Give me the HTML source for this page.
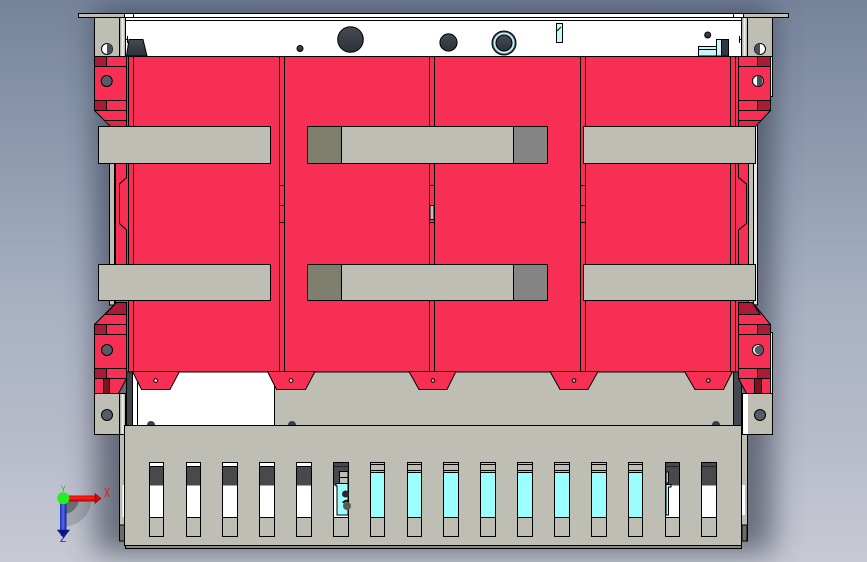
<!DOCTYPE html>
<html><head><meta charset="utf-8"><style>
html,body{margin:0;padding:0;width:867px;height:562px;overflow:hidden;background:#a0a8b8}
svg{display:block}
text{font-family:"Liberation Sans",sans-serif}
</style></head><body>
<svg xmlns="http://www.w3.org/2000/svg" width="867" height="562" viewBox="0 0 867 562">
<defs>
<linearGradient id="bg" x1="0" y1="0" x2="0" y2="1">
<stop offset="0" stop-color="#76849a"/><stop offset=".32" stop-color="#929fb3"/><stop offset=".55" stop-color="#a8b2c3"/><stop offset=".78" stop-color="#b7bbc9"/><stop offset="1" stop-color="#c7cad4"/>
</linearGradient>
<linearGradient id="dk" x1="0" y1="0" x2="0" y2="1"><stop offset="0" stop-color="#454a54"/><stop offset="1" stop-color="#2c3039"/></linearGradient>
<linearGradient id="st" x1="0" y1="0" x2="1" y2="0"><stop offset="0" stop-color="#8f8f88"/><stop offset=".5" stop-color="#f4f4f0"/><stop offset="1" stop-color="#a5a59e"/></linearGradient>
<linearGradient id="hz" x1="0" y1="0" x2="0" y2="1"><stop offset="0" stop-color="#e00000"/><stop offset=".4" stop-color="#ff2020"/><stop offset="1" stop-color="#b00000"/></linearGradient>
<linearGradient id="vt" x1="0" y1="0" x2="1" y2="0"><stop offset="0" stop-color="#1f2fb0"/><stop offset=".5" stop-color="#5566f0"/><stop offset="1" stop-color="#101c90"/></linearGradient>
<filter id="bl" x="-20%" y="-20%" width="140%" height="140%"><feGaussianBlur stdDeviation="15"/></filter>
<g id="s14"><rect x="0" y="462.5" width="14" height="74" fill="#bebeb4"/><rect x="0" y="463" width="14" height="54" fill="#fff"/><rect x="0" y="466" width="14" height="19.5" fill="#47494d"/><path d="M0 466.5H14M0 517.5H14M0 462.5H14V536.5H0Z" fill="none" stroke="#000"/></g>
<g id="s15"><rect x="0" y="462.5" width="15" height="74" fill="#bebeb4"/><rect x="0" y="463" width="15" height="54" fill="#fff"/><rect x="0" y="466" width="15" height="19.5" fill="#47494d"/><path d="M0 466.5H15M0 517.5H15M0 462.5H15V536.5H0Z" fill="none" stroke="#000"/></g>
<g id="c14"><rect x="0" y="462.5" width="14" height="74" fill="#bebeb4"/><rect x="0" y="473" width="14" height="44" fill="#9cffff"/><path d="M0 464.5H14M0 470.5H14M0 472.5H14M0 517.5H14M0 462.5H14V536.5H0Z" fill="none" stroke="#000"/></g>
<g id="c15"><rect x="0" y="462.5" width="15" height="74" fill="#bebeb4"/><rect x="0" y="473" width="15" height="44" fill="#9cffff"/><path d="M0 464.5H15M0 470.5H15M0 472.5H15M0 517.5H15M0 462.5H15V536.5H0Z" fill="none" stroke="#000"/></g>
<g id="tick"><path d="M0 185.5H5M0 205.5H5M0 222.5H5" stroke="#000" fill="none"/></g>
</defs>

<rect width="867" height="562" fill="url(#bg)"/>
<rect x="95" y="8" width="678" height="545" fill="#30394a" opacity=".62" filter="url(#bl)"/>

<g shape-rendering="crispEdges" stroke-linejoin="miter">
<!-- behind tray -->
<rect x="119.5" y="430" width="5" height="111" fill="#bebeb4" stroke="#000"/>
<rect x="119.5" y="525" width="5" height="16" fill="#6d6d64" stroke="#000"/>
<rect x="122.5" y="485" width="2" height="32" fill="#fff"/>
<rect x="741.5" y="430" width="6" height="111" fill="#bebeb4" stroke="#000"/>
<rect x="742" y="525" width="5" height="16" fill="#6d6d64" stroke="#000"/>
<rect x="742" y="485" width="3" height="30" fill="#fff"/>

<!-- top flange and white panel -->
<rect x="125" y="13.5" width="618" height="7" fill="#fff"/>
<rect x="125" y="20" width="618" height="36" fill="#fff"/>
<path d="M125 13.5H743M125 17.5H743M125 20.5H743M133.5 14V17M733.5 14V17" stroke="#000" fill="none"/>
<rect x="78.5" y="13.5" width="46" height="4" fill="#bebeb4" stroke="#000"/>
<rect x="743.5" y="13.5" width="45" height="4" fill="#bebeb4" stroke="#000"/>
<!-- top left bracket -->
<rect x="94.5" y="17.5" width="31" height="39" fill="#bebeb4" stroke="#000"/>
<rect x="119.5" y="17.5" width="6" height="39" fill="url(#st)" stroke="#000"/>
<!-- top right bracket -->
<rect x="741.5" y="17.5" width="31" height="39" fill="#bebeb4" stroke="#000"/>
<rect x="741.5" y="17.5" width="6" height="39" fill="url(#st)" stroke="#000"/>
</g>

<!-- top holes -->
<circle cx="107" cy="49" r="5.5" fill="#fff" stroke="#000"/><path d="M107 43.5A5.5 5.5 0 0 1 107 54.5Z" fill="#4a4e56"/>
<circle cx="760" cy="49" r="5.5" fill="#fff" stroke="#000"/><path d="M760 43.5A5.5 5.5 0 0 0 760 54.5Z" fill="#4a4e56"/>
<path d="M129 39.5H143L147 56H126.5Z" fill="url(#dk)" stroke="#000"/>
<circle cx="300" cy="48.5" r="3" fill="url(#dk)" stroke="#000"/>
<circle cx="350.5" cy="39.5" r="12.8" fill="url(#dk)" stroke="#000"/>
<circle cx="448.5" cy="42.5" r="8.6" fill="url(#dk)" stroke="#000"/>
<circle cx="504" cy="43" r="12" fill="#4a5058" stroke="#000"/>
<circle cx="504" cy="43" r="10.5" fill="#bdeff7"/>
<circle cx="504" cy="43" r="8" fill="url(#dk)" stroke="#000"/>
<rect x="556.5" y="23.5" width="6" height="19" fill="#c8f4fb" stroke="#000"/><path d="M557 31L561 27" stroke="#000" fill="none"/>
<circle cx="707.7" cy="35" r="3" fill="url(#dk)" stroke="#000"/>
<g shape-rendering="crispEdges">
<path d="M698.5 56V46.5H716.5V39.5H722V56Z" fill="#c8f4fb" stroke="#000"/>
<path d="M698.5 49.5H716.5M716.5 46.5V56" fill="none" stroke="#000"/>
<rect x="721.5" y="39.5" width="7" height="16.5" fill="#33373f" stroke="#000"/>
<path d="M739.5 36V43M739.5 39.5H742" stroke="#000" fill="none"/>
<path d="M127.5 36V43M125 39.5H127" stroke="#000" fill="none"/>

<!-- side rails mid -->
<rect x="109.5" y="160" width="6" height="145" fill="#bebeb4" stroke="#000"/>
<path d="M114.5 160V305" stroke="#000" fill="none"/>
<rect x="748.5" y="120" width="9" height="185" fill="#bebeb4" stroke="#000"/>
<rect x="754" y="121" width="3" height="183" fill="#e8e8e0"/>
<path d="M753.5 120V305" stroke="#000" fill="none"/>

<!-- bottom areas -->
<rect x="132.5" y="371.5" width="142" height="55" fill="#fff" stroke="#000"/>
<path d="M137.5 372V426" stroke="#000" fill="none"/>
<rect x="126.5" y="371.5" width="6" height="55" fill="#3f434a" stroke="#000"/>
<rect x="274.5" y="371.5" width="459" height="55" fill="#bebeb4" stroke="#000"/>
<rect x="733.5" y="371.5" width="8" height="55" fill="#44484f" stroke="#000"/>

<!-- main red -->
<rect x="115" y="56" width="633" height="316" fill="#f72f55"/>
<path d="M125 56.5H743M126.5 372H741" stroke="#000" fill="none"/>

<!-- vertical lines -->
<path d="M128.5 56V372M133.5 56V372M279.5 56V372M284.5 56V372M429.5 56V372M434.5 56V372M580.5 56V372M585.5 56V372M730.5 56V372M735.5 56V372" stroke="#000" fill="none"/>
<path d="M115.5 160V305M748.5 160V305" stroke="#000" fill="none"/>
<use href="#tick" x="279.5"/><use href="#tick" x="429.5"/><use href="#tick" x="580.5"/>
<rect x="430" y="205.5" width="4" height="14" fill="#bebeb4" stroke="#000"/>
</g>

<!-- top left block -->
<g>
<path d="M94.5 56.5H126.5V126.5H110.5L94.5 110.5Z" fill="#f72f55" stroke="#000"/>
<rect x="94.5" y="56.5" width="12" height="10" fill="#a81c37" stroke="#000" shape-rendering="crispEdges"/>
<rect x="94.5" y="100.5" width="12" height="10" fill="#a81c37" stroke="#000" shape-rendering="crispEdges"/>
<rect x="94.5" y="66.5" width="32" height="34" fill="#f72f55" stroke="#000" shape-rendering="crispEdges"/>
<path d="M94.5 110.5H126.5M104.5 120.5H126.5" stroke="#000" fill="none" shape-rendering="crispEdges"/>
<path d="M105 121H126V126H111Z" fill="#e0264a"/>
<circle cx="106.7" cy="81" r="5.5" fill="#565c66" stroke="#000"/>
<!-- top right block -->
<path d="M738.5 56.5H770.5V110.5L755.5 126.5H738.5Z" fill="#f72f55" stroke="#000"/>
<rect x="757.5" y="56.5" width="13" height="10" fill="#a81c37" stroke="#000" shape-rendering="crispEdges"/>
<rect x="757.5" y="100.5" width="13" height="10" fill="#a81c37" stroke="#000" shape-rendering="crispEdges"/>
<rect x="738.5" y="66.5" width="32" height="34" fill="#f72f55" stroke="#000" shape-rendering="crispEdges"/>
<path d="M738.5 110.5H770.5M738.5 120.5H760.5" stroke="#000" fill="none" shape-rendering="crispEdges"/>
<path d="M739 121H760L755 126H739Z" fill="#e0264a"/>
<rect x="770.5" y="56.5" width="2" height="40" fill="#e8e8e0" stroke="#000" shape-rendering="crispEdges"/>
<circle cx="758" cy="81" r="5.5" fill="#fff" stroke="#000"/><path d="M757 75.5A5.5 5.5 0 0 1 757 86.5Z" fill="#4a4e56"/>
<!-- side inner contours -->
<path d="M126.5 163V177.5L119.5 184V223.5L126.5 230V264" fill="none" stroke="#000"/>
<path d="M738.5 163V177.5L746.5 184V223.5L738.5 230V264" fill="none" stroke="#000"/>
<!-- bottom left block -->
<path d="M94.5 324.5L116.5 302.5H126.5V378.5L118.5 393.5H94.5Z" fill="#f72f55" stroke="#000"/>
<path d="M105 314.5L116.5 302.5H126.5V314.5Z" fill="#a81c37" stroke="#000"/>
<path d="M94.5 324.5H126.5M94.5 378.5H126.5" stroke="#000" fill="none" shape-rendering="crispEdges"/>
<rect x="94.5" y="324.5" width="12" height="10" fill="#a81c37" stroke="#000" shape-rendering="crispEdges"/>
<rect x="94.5" y="368.5" width="12" height="10" fill="#a81c37" stroke="#000" shape-rendering="crispEdges"/>
<rect x="94.5" y="334.5" width="32" height="34" fill="#f72f55" stroke="#000" shape-rendering="crispEdges"/>
<rect x="103.5" y="378.5" width="6" height="15" fill="#7c1226" stroke="#000" shape-rendering="crispEdges"/>
<circle cx="107" cy="350" r="5.5" fill="#565c66" stroke="#000"/>
<!-- bottom right block -->
<path d="M738.5 302.5H752.5L770.5 324.5V393.5H746.5L738.5 378.5Z" fill="#f72f55" stroke="#000"/>
<path d="M738.5 302.5H752.5L760 314.5H738.5Z" fill="#a81c37" stroke="#000"/>
<path d="M738.5 324.5H770.5M738.5 378.5H770.5" stroke="#000" fill="none" shape-rendering="crispEdges"/>
<rect x="757.5" y="324.5" width="13" height="10" fill="#a81c37" stroke="#000" shape-rendering="crispEdges"/>
<rect x="757.5" y="368.5" width="13" height="10" fill="#a81c37" stroke="#000" shape-rendering="crispEdges"/>
<rect x="738.5" y="334.5" width="32" height="34" fill="#f72f55" stroke="#000" shape-rendering="crispEdges"/>
<rect x="754.5" y="378.5" width="7" height="15" fill="#7c1226" stroke="#000" shape-rendering="crispEdges"/>
<rect x="770.5" y="332.5" width="2" height="61" fill="#e8e8e0" stroke="#000" shape-rendering="crispEdges"/>
<circle cx="758" cy="350" r="5.5" fill="#fff" stroke="#000"/><circle cx="759" cy="350" r="4.4" fill="#565c66"/>
</g>

<g shape-rendering="crispEdges">
<!-- bottom brackets -->
<rect x="94.5" y="393.5" width="31" height="41" fill="#bebeb4" stroke="#000"/>
<rect x="119.5" y="393.5" width="6" height="41" fill="url(#st)" stroke="#000"/>
<rect x="741.5" y="393.5" width="31" height="41" fill="#bebeb4" stroke="#000"/>
<rect x="742" y="394" width="6" height="40" fill="#fff"/>
<path d="M742.5 394V434" stroke="#000" fill="none"/>
</g>
<circle cx="107" cy="415" r="5.5" fill="#565c66" stroke="#000"/>
<circle cx="760" cy="415" r="5.5" fill="#565c66" stroke="#000"/>

<!-- tabs -->
<g fill="#f72f55" stroke="#000">
<path d="M132.5 371.5H179.5L170 389.5H141.5Z"/>
<path d="M267.5 371.5H315L305.5 389.5H276.5Z"/>
<path d="M409 371.5H456L447 389.5H419Z"/>
<path d="M550 371.5H598L588 389.5H560Z"/>
<path d="M684.5 371.5H732.5L723.5 389.5H695Z"/>
</g>
<circle cx="155.7" cy="380.5" r="1.8" fill="#fff" stroke="#000"/>
<circle cx="291" cy="380.5" r="1.8" fill="#fff" stroke="#000"/>
<circle cx="433" cy="380.5" r="1.8" fill="#bebeb4" stroke="#000"/>
<circle cx="574" cy="380.5" r="1.8" fill="#bebeb4" stroke="#000"/>
<circle cx="708.3" cy="380.5" r="1.8" fill="#bebeb4" stroke="#000"/>

<!-- bumps -->
<circle cx="151" cy="425" r="4" fill="#3a3e46"/><circle cx="292" cy="425" r="4" fill="#3a3e46"/><circle cx="716" cy="425" r="4" fill="#3a3e46"/>

<g shape-rendering="crispEdges">
<!-- bars -->
<g fill="#bebeb4" stroke="#000">
<rect x="98.5" y="126.5" width="172" height="37"/>
<rect x="307.5" y="126.5" width="240" height="37"/>
<rect x="583.5" y="126.5" width="172" height="37"/>
<rect x="98.5" y="264.5" width="172" height="36"/>
<rect x="307.5" y="264.5" width="240" height="36"/>
<rect x="583.5" y="264.5" width="172" height="36"/>
<rect x="307.5" y="126.5" width="34" height="37" fill="#7f7f6d"/>
<rect x="513.5" y="126.5" width="34" height="37" fill="#848484"/>
<rect x="307.5" y="264.5" width="34" height="36" fill="#7f7f6d"/>
<rect x="513.5" y="264.5" width="34" height="36" fill="#848484"/>
</g>

<!-- tray -->
<rect x="125.5" y="545" width="616" height="3.5" fill="#8a8a80" stroke="#000"/>
<rect x="124.5" y="425.5" width="617" height="120" fill="#bebeb4" stroke="#000"/>

<use href="#s14" x="149.5"/>
<use href="#s14" x="186.5"/>
<use href="#s15" x="222.5"/>
<use href="#s15" x="259.5"/>
<use href="#s15" x="296.5"/>
<use href="#s15" x="333.5"/>
<use href="#c14" x="370.5"/>
<use href="#c14" x="407.5"/>
<use href="#c15" x="443.5"/>
<use href="#c15" x="480.5"/>
<use href="#c15" x="517.5"/>
<use href="#c15" x="554.5"/>
<use href="#c15" x="591.5"/>
<use href="#c14" x="628.5"/>
<use href="#s14" x="665.5"/>
<use href="#s15" x="701.5"/>

<!-- slot 6 detail -->
<rect x="334" y="463" width="14" height="3.5" fill="#47494d"/>
<rect x="339.5" y="471.5" width="8.5" height="12" fill="#bebeb4" stroke="#000"/>
<path d="M339.5 477.5H348" stroke="#000" fill="none"/>
<path d="M336 483.5H348V515H337V486H336Z" fill="#9cffff" stroke="#000"/>
<!-- slot 14 detail -->
<rect x="666" y="463" width="13" height="3.5" fill="#47494d"/>
<path d="M666 484.5H671V487H668.5V515H666Z" fill="#9cffff" stroke="#000"/>
<rect x="666" y="472" width="2.5" height="11" fill="#bebeb4" stroke="#000"/>
<rect x="702" y="463" width="14" height="3.5" fill="#47494d"/>
</g>
<circle cx="345.5" cy="494" r="3.5" fill="#26282d"/><circle cx="347" cy="506" r="4" fill="#5a5a55"/><path d="M343 503A4 4 0 0 1 348 501" stroke="#111" stroke-width="2" fill="none"/>

<!-- triad -->
<path d="M63.3 498.3H91.5A28 28 0 0 1 63.3 526.5Z" fill="#3c3f46" opacity=".22"/>
<path d="M63.3 498.3H79A15.7 15.7 0 0 1 63.3 514Z" fill="#3c3f46" opacity=".55"/>
<rect x="68" y="495.5" width="28" height="6" fill="url(#hz)"/>
<path d="M95 493.5L101 498.5L95 503.5Z" fill="#c01010" stroke="#a00000" stroke-width=".6"/>
<rect x="60" y="503" width="6.5" height="28" fill="url(#vt)"/>
<path d="M57.5 530H69.5L63.5 537.5Z" fill="#0c1880" stroke="#0a1270" stroke-width=".6"/>
<circle cx="63.3" cy="498.3" r="6" fill="#22ee22"/>
<text transform="translate(107 497) scale(.7 1)" font-size="13" fill="#f01010" text-anchor="middle">X</text>
<text x="63.3" y="491.5" font-size="8" fill="#18c018" text-anchor="middle">Y</text>
<text x="63" y="542" font-size="10" fill="#1010e0" text-anchor="middle">Z</text>
</svg>
</body></html>
